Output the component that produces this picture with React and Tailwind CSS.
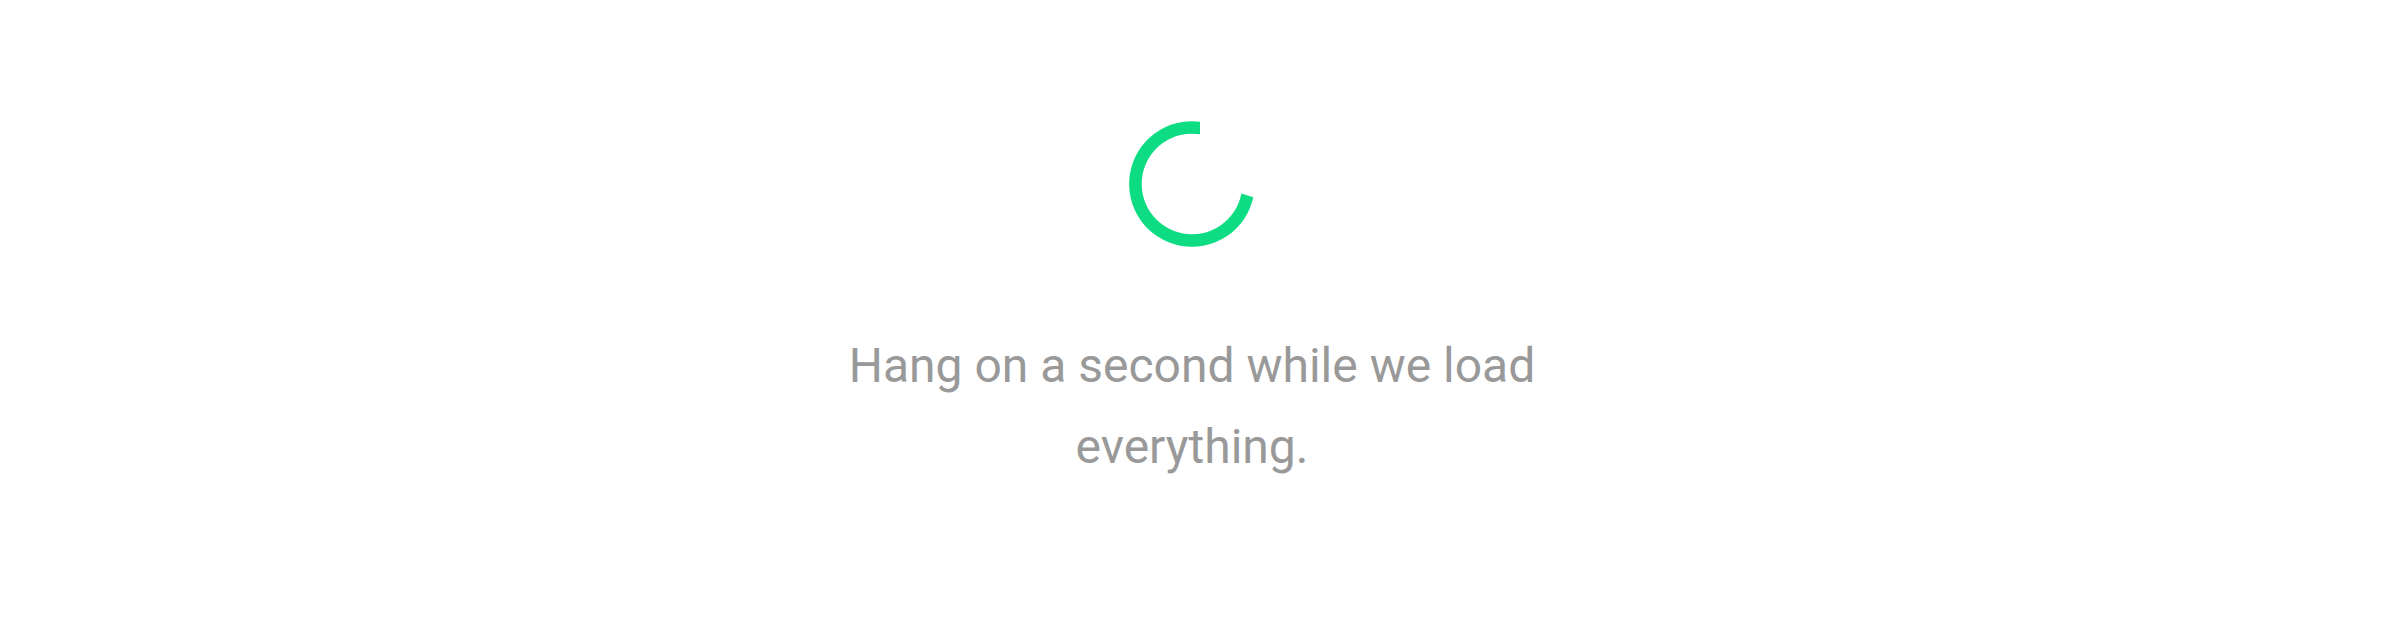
export default function App() {
  return (
    <main className="flex min-h-screen flex-col items-center bg-white pt-[121px] pr-4 font-['Roboto',sans-serif]">
      <div role="status" className="flex flex-col items-center gap-[78px]">
        <svg viewBox="0 0 126 126" className="size-[126px]" aria-hidden="true">
          <path
            d="M71 .7A62.8 62.8 0 1 0 124.3 76.3L112.4 72.4A50.3 50.3 0 1 1 71 13.3Z"
            fill="#0ddc82"
          />
        </svg>
        <p className="max-w-[720px] text-center text-[48px] leading-[81px] text-[#999999]">
          Hang on a second while we load everything.
        </p>
      </div>
    </main>
  );
}
